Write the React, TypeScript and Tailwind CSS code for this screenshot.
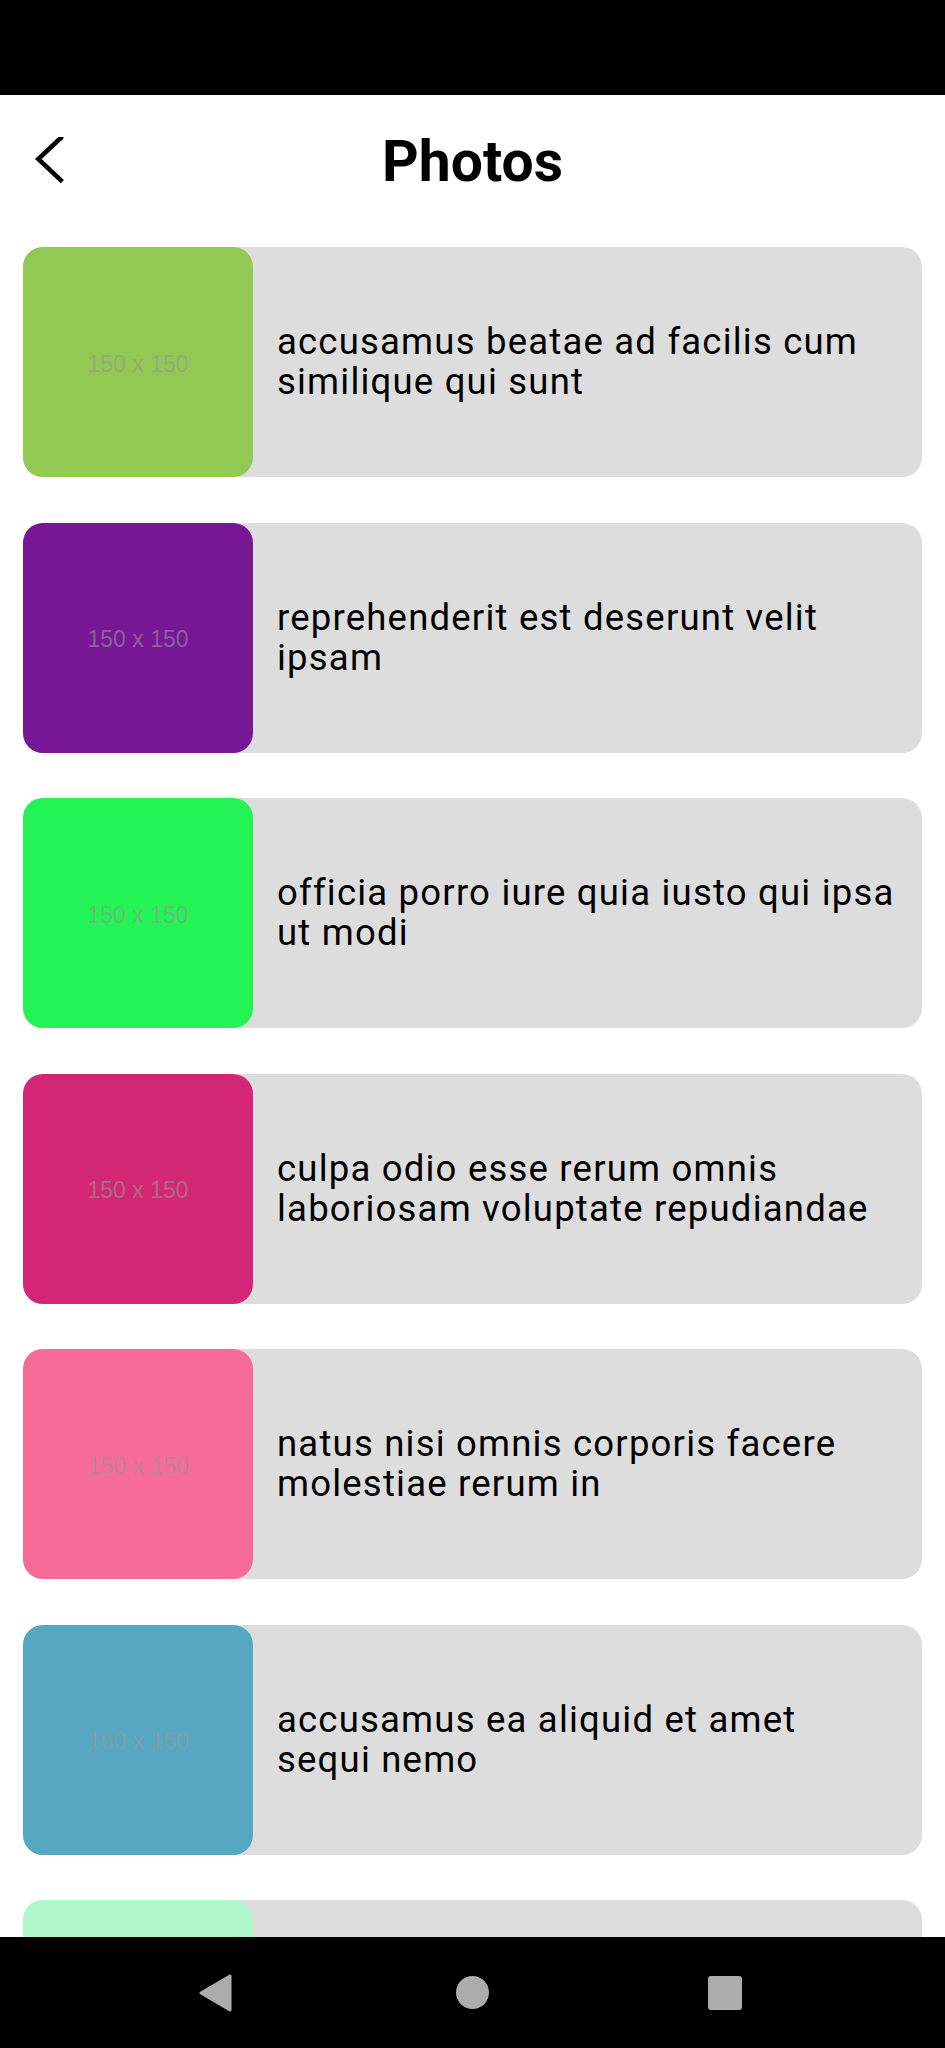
import React from "react";

const photos = [
  { title: "accusamus beatae ad facilis cum similique qui sunt", color: "#92c952" },
  { title: "reprehenderit est deserunt velit ipsam", color: "#771796" },
  { title: "officia porro iure quia iusto qui ipsa ut modi", color: "#24f355" },
  { title: "culpa odio esse rerum omnis laboriosam voluptate repudiandae", color: "#d32776" },
  { title: "natus nisi omnis corporis facere molestiae rerum in", color: "#f66b97" },
  { title: "accusamus ea aliquid et amet sequi nemo", color: "#56a8c2" },
  { title: "officia delectus consequatur vero aut veniam explicabo molestias", color: "#b0f7cc" },
];

function PhotoRow({ title, color }: { title: string; color: string }) {
  return (
    <div className="flex h-[230px] shrink-0 items-center rounded-[20px] bg-[#dddddd]">
      {/* placeholder thumbnail */}
      <div
        className="flex h-[230px] w-[230px] shrink-0 items-center justify-center rounded-[20px] pt-[4px]"
        style={{ backgroundColor: color }}
      >
        <span className="font-['Liberation_Sans',Arial,sans-serif] text-[23px] text-[#969696]/60">
          150 x 150
        </span>
      </div>
      <p className="flex-1 pl-[24px] pr-[25px] font-['Roboto',sans-serif] text-[36.5px] leading-[40px] tracking-[0.033em] text-black">
        {title}
      </p>
    </div>
  );
}

export default function App() {
  return (
    <div className="flex h-[2048px] w-full flex-col overflow-hidden bg-white font-['Roboto',sans-serif]">
      {/* status bar */}
      <div className="h-[95px] shrink-0 bg-black" />

      {/* app bar */}
      <header className="grid h-[132px] shrink-0 grid-cols-[1fr_auto_1fr] items-center">
        <div className="pl-[34px]">
          <svg width="30" height="48" viewBox="0 0 30 48" fill="none">
            <path d="M26.7 1 L4.3 22 L26.7 43" stroke="#000" strokeWidth="4.6" strokeLinecap="square" />
          </svg>
        </div>
        <h1 className="text-[57px] font-bold leading-none text-black">Photos</h1>
        <div />
      </header>

      {/* list */}
      <main className="flex flex-1 flex-col gap-[45.5px] overflow-hidden px-[23px] pt-[20px]">
        {photos.map((p, i) => (
          <PhotoRow key={i} title={p.title} color={p.color} />
        ))}
      </main>

      {/* android nav bar */}
      <nav className="flex h-[111px] shrink-0 items-center bg-black">
        <div className="flex w-full items-center">
          <div className="flex w-[315px] justify-end pr-[82px]">
            <svg width="34" height="38" viewBox="0 0 34 38">
              <path d="M31 2 L31 36 L2 19 Z" fill="#acacac" stroke="#acacac" strokeWidth="3" strokeLinejoin="round" />
            </svg>
          </div>
          <div className="flex flex-1 justify-center">
            <div className="h-[33px] w-[33px] rounded-full bg-[#acacac]" />
          </div>
          <div className="flex w-[315px] justify-start pl-[78px]">
            <div className="h-[34px] w-[34px] rounded-[3px] bg-[#acacac]" />
          </div>
        </div>
      </nav>
    </div>
  );
}
